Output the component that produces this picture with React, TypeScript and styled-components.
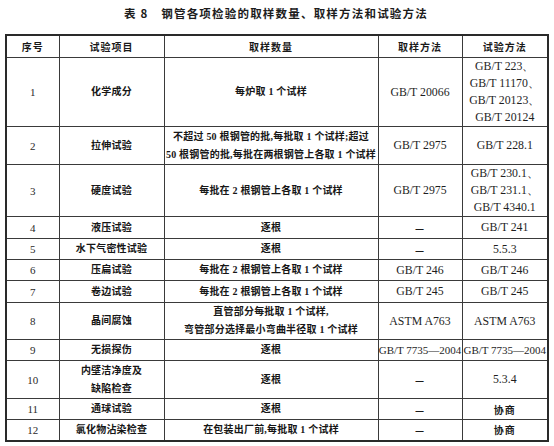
import React from "react";
import styled, { createGlobalStyle } from "styled-components";

type RowType = {
    no: string;
    item: string[];
    amount: string[];
    method: string;
    test: string[];
    height: number;
};

const ROWS: RowType[] = [
    {
        no: "1",
        item: ["化学成分"],
        amount: ["每炉取 1 个试样"],
        method: "GB/T 20066",
        test: ["GB/T 223、", "GB/T 11170、", "GB/T 20123、", "GB/T 20124"],
        height: 69,
    },
    {
        no: "2",
        item: ["拉伸试验"],
        amount: [
            "不超过 50 根钢管的批,每批取 1 个试样;超过",
            "50 根钢管的批,每批在两根钢管上各取 1 个试样",
        ],
        method: "GB/T 2975",
        test: ["GB/T 228.1"],
        height: 38,
    },
    {
        no: "3",
        item: ["硬度试验"],
        amount: ["每批在 2 根钢管上各取 1 个试样"],
        method: "GB/T 2975",
        test: ["GB/T 230.1、", "GB/T 231.1、", "GB/T 4340.1"],
        height: 52,
    },
    {
        no: "4",
        item: ["液压试验"],
        amount: ["逐根"],
        method: "—",
        test: ["GB/T 241"],
        height: 22,
    },
    {
        no: "5",
        item: ["水下气密性试验"],
        amount: ["逐根"],
        method: "—",
        test: ["5.5.3"],
        height: 21,
    },
    {
        no: "6",
        item: ["压扁试验"],
        amount: ["每批在 2 根钢管上各取 1 个试样"],
        method: "GB/T 246",
        test: ["GB/T 246"],
        height: 21,
    },
    {
        no: "7",
        item: ["卷边试验"],
        amount: ["每批在 2 根钢管上各取 1 个试样"],
        method: "GB/T 245",
        test: ["GB/T 245"],
        height: 22,
    },
    {
        no: "8",
        item: ["晶间腐蚀"],
        amount: ["直管部分每批取 1 个试样,", "弯管部分选择最小弯曲半径取 1 个试样"],
        method: "ASTM A763",
        test: ["ASTM A763"],
        height: 36,
    },
    {
        no: "9",
        item: ["无损探伤"],
        amount: ["逐根"],
        method: "GB/T 7735—2004",
        test: ["GB/T 7735—2004"],
        height: 21,
    },
    {
        no: "10",
        item: ["内壁洁净度及", "缺陷检查"],
        amount: ["逐根"],
        method: "—",
        test: ["5.3.4"],
        height: 38,
    },
    {
        no: "11",
        item: ["通球试验"],
        amount: ["逐根"],
        method: "—",
        test: ["协商"],
        height: 21,
    },
    {
        no: "12",
        item: ["氯化物沾染检查"],
        amount: ["在包装出厂前,每批取 1 个试样"],
        method: "—",
        test: ["协商"],
        height: 21,
    },
];

const GlobalStyle = createGlobalStyle`
    html, body {
        margin: 0;
        padding: 0;
        background: #ffffff;
    }
    body {
        font-family: "Liberation Serif", "Noto Sans CJK SC", serif;
        color: #141414;
    }
`;

const isCjk = (text: string): boolean => text === "—" || text === "协商";

const App = () => {
    return (
        <>
            <GlobalStyle />
            <Page>
                <Caption>表 8　钢管各项检验的取样数量、取样方法和试验方法</Caption>
                <Table>
                    <colgroup>
                        <col style={{ width: 53 }} />
                        <col style={{ width: 105 }} />
                        <col style={{ width: 214 }} />
                        <col style={{ width: 84 }} />
                        <col style={{ width: 86 }} />
                    </colgroup>
                    <thead>
                        <tr>
                            <HeadCell>序号</HeadCell>
                            <HeadCell>试验项目</HeadCell>
                            <HeadCell>取样数量</HeadCell>
                            <HeadCell>取样方法</HeadCell>
                            <HeadCell>试验方法</HeadCell>
                        </tr>
                    </thead>
                    <tbody>
                        {ROWS.map((row) => (
                            <Row key={row.no} $height={row.height}>
                                <NumCell>{row.no}</NumCell>
                                <TextCell>
                                    {row.item.map((line) => (
                                        <Line key={line} $lh={18}>
                                            {line}
                                        </Line>
                                    ))}
                                </TextCell>
                                <TextCell>
                                    {row.amount.map((line) => (
                                        <Line key={line} $lh={18}>
                                            {line}
                                        </Line>
                                    ))}
                                </TextCell>
                                <CodeCell
                                    $cjk={isCjk(row.method)}
                                    $long={row.method.length > 12}
                                >
                                    {row.method}
                                </CodeCell>
                                <CodeCell
                                    $cjk={isCjk(row.test[0])}
                                    $long={row.test[0].length > 12}
                                >
                                    {row.test.map((line) => (
                                        <Line key={line} $lh={17}>
                                            {line}
                                        </Line>
                                    ))}
                                </CodeCell>
                            </Row>
                        ))}
                    </tbody>
                </Table>
            </Page>
        </>
    );
};

export default App;

const Page = styled.div`
    width: 554px;
    height: 446px;
    padding: 0 7px 0 5px;
    box-sizing: border-box;
    display: flex;
    flex-direction: column;
    align-items: stretch;
`;

const Caption = styled.div`
    height: 34px;
    box-sizing: border-box;
    padding: 5px 0 0 0;
    text-align: center;
    font-family: "Noto Sans CJK SC", sans-serif;
    font-weight: 700;
    font-size: 11.5px;
    letter-spacing: 1.2px;
    line-height: 16px;
    color: #1c1c1c;
`;

const Table = styled.table`
    width: 542px;
    table-layout: fixed;
    border-collapse: collapse;
    border: 2px solid #2a2a2a;
`;

const HeadCell = styled.th`
    height: 21px;
    padding: 0;
    border: 1px solid #3a3a3a;
    font-family: "Noto Sans CJK SC", sans-serif;
    font-weight: 700;
    font-size: 10px;
    letter-spacing: 1px;
    text-align: center;
    vertical-align: middle;
    color: #1a1a1a;
`;

const Row = styled.tr<{ $height: number }>`
    height: ${(p) => p.$height}px;
`;

const Cell = styled.td`
    padding: 0;
    border: 1px solid #3a3a3a;
    text-align: center;
    vertical-align: middle;
    white-space: nowrap;
    overflow: visible;
`;

const NumCell = styled(Cell)`
    font-family: "Liberation Serif", serif;
    font-size: 11px;
    font-weight: 400;
    color: #2a2a2a;
`;

const TextCell = styled(Cell)`
    font-family: "Liberation Serif", "Noto Sans CJK SC", serif;
    font-weight: 700;
    font-size: 10px;
    letter-spacing: 0.2px;
    color: #161616;
`;

const CodeCell = styled(Cell)<{ $cjk: boolean; $long: boolean }>`
    font-family: ${(p) =>
        p.$cjk
            ? `"Noto Sans CJK SC", sans-serif`
            : `"Liberation Serif", serif`};
    font-weight: ${(p) => (p.$cjk ? 700 : 400)};
    font-size: ${(p) => (p.$cjk ? "10px" : p.$long ? "11px" : "11.8px")};
    color: ${(p) => (p.$cjk ? "#1a1a1a" : "#1e1e1e")};
    letter-spacing: ${(p) => (p.$cjk ? "1px" : "0")};
`;

const Line = styled.div<{ $lh: number }>`
    line-height: ${(p) => p.$lh}px;
`;
